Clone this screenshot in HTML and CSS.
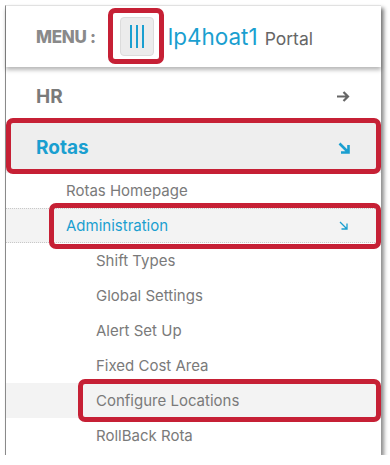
FILE: index.html
```html
<!DOCTYPE html>
<html lang="en">
<head>
    <meta charset="UTF-8">
    <meta name="viewport" content="width=device-width, initial-scale=1.0">
    <title>Menu</title>
    <link rel="stylesheet" href="styles.css">
</head>
<body>
    <div class="panel">
        <div class="menu-head">
            <span class="menu-label">MENU :</span>
            <button class="burger mark">
                <span></span><span></span><span></span>
            </button>
            <span class="site">lp4hoat1</span>
            <span class="portal">Portal</span>
        </div>

        <ul class="nav">
            <li class="top-item">
                <span>HR</span>
                <svg class="arrow" width="14" height="11" viewBox="0 0 14 11">
                    <path d="M1 5.5h11M7.5 1l4.5 4.5-4.5 4.5" fill="none" stroke="#666" stroke-width="2.2"/>
                </svg>
            </li>
            <li class="top-item open mark mark-rotas">
                <span>Rotas</span>
                <svg class="arrow" width="12" height="12" viewBox="0 0 12 12">
                    <path d="M1.5 1.5l8 8M3 10.5h7.5V3" fill="none" stroke="#1a9fd0" stroke-width="2.6"/>
                </svg>
            </li>
            <li class="sub-item">Rotas Homepage</li>
            <li class="sub-item open shaded dotted mark mark-admin">
                <span>Administration</span>
                <svg class="arrow" width="9" height="9" viewBox="0 0 9 9">
                    <path d="M1 1l6.5 6.5M2.5 8h5.5V2.5" fill="none" stroke="#1a9fd0" stroke-width="1.3"/>
                </svg>
            </li>
            <li class="leaf">Shift Types</li>
            <li class="leaf">Global Settings</li>
            <li class="leaf">Alert Set Up</li>
            <li class="leaf">Fixed Cost Area</li>
            <li class="leaf shaded mark mark-config">Configure Locations</li>
            <li class="leaf">RollBack Rota</li>
        </ul>
    </div>
</body>
</html>
```

FILE: styles.css
```css
* {
    box-sizing: border-box;
}
body {
    margin: 0;
    background: #fff;
    font-family: 'Inter', 'Liberation Sans', sans-serif;
}
.panel {
    position: relative;
    width: 376px;
    height: 450px;
    margin: 5px 0 0 5px;
    background: #fff;
    border-left: 1px solid #8a8a8a;
    border-top: 1px solid #e4e4e4;
    box-shadow: 3px 3px 4px rgba(0, 0, 0, 0.45);
}
.menu-head {
    position: relative;
    z-index: 2;
    display: flex;
    align-items: center;
    height: 61px;
    padding-left: 30px;
    background: #fff;
    box-shadow: 0 3px 4px rgba(0, 0, 0, 0.28);
}
.menu-label {
    font-size: 17px;
    font-weight: 800;
    color: #8a8a8a;
    letter-spacing: -0.3px;
}
.burger {
    display: flex;
    justify-content: center;
    gap: 4px;
    width: 34px;
    height: 39px;
    margin-left: 24px;
    padding: 7px 0;
    background: #ececec;
    border: 1px solid #dcdcdc;
    border-radius: 4px;
}
.burger span {
    width: 2px;
    height: 100%;
    background: #1a9fd0;
}
.site {
    margin-left: 14px;
    font-size: 22.5px;
    color: #1a9fd0;
}
.portal {
    margin-left: 7px;
    margin-top: 3px;
    font-size: 17.5px;
    color: #666;
}
.nav {
    list-style: none;
    margin: 0;
    padding: 4px 0 0;
}
.nav li {
    display: flex;
    align-items: center;
    justify-content: space-between;
    color: #7a7a7a;
}
.top-item {
    height: 51px;
    padding: 0 31px 0 30px;
    font-size: 19px;
    font-weight: 700;
    color: #777;
}
.top-item.open {
    background: #eee;
    color: #1a9fd0;
}
.sub-item {
    height: 35px;
    padding: 0 33px 0 60px;
    font-size: 15px;
}
.leaf {
    height: 35px;
    padding-left: 90px;
    font-size: 15px;
}
.nav .open {
    color: #1a9fd0;
}
.shaded {
    background: #f3f3f3;
}
.dotted {
    border-top: 1px dotted #c8c8c8;
    border-bottom: 1px dotted #c8c8c8;
}
.arrow {
    display: block;
}

/* red annotation boxes */
.mark {
    position: relative;
}
.mark::after {
    content: "";
    position: absolute;
    border: 5px solid #c62035;
    border-radius: 7px;
    pointer-events: none;
}
.burger.mark::after {
    top: -10px;
    bottom: -9px;
    left: -13px;
    right: -11px;
}
.mark-rotas::after {
    top: -4px;
    bottom: -1px;
    left: 0;
    right: 0;
}
.mark-admin::after {
    top: -6px;
    bottom: -7px;
    left: 43px;
    right: 0;
}
.mark-config::after {
    top: -4px;
    bottom: -4px;
    left: 72px;
    right: 0;
}
```
